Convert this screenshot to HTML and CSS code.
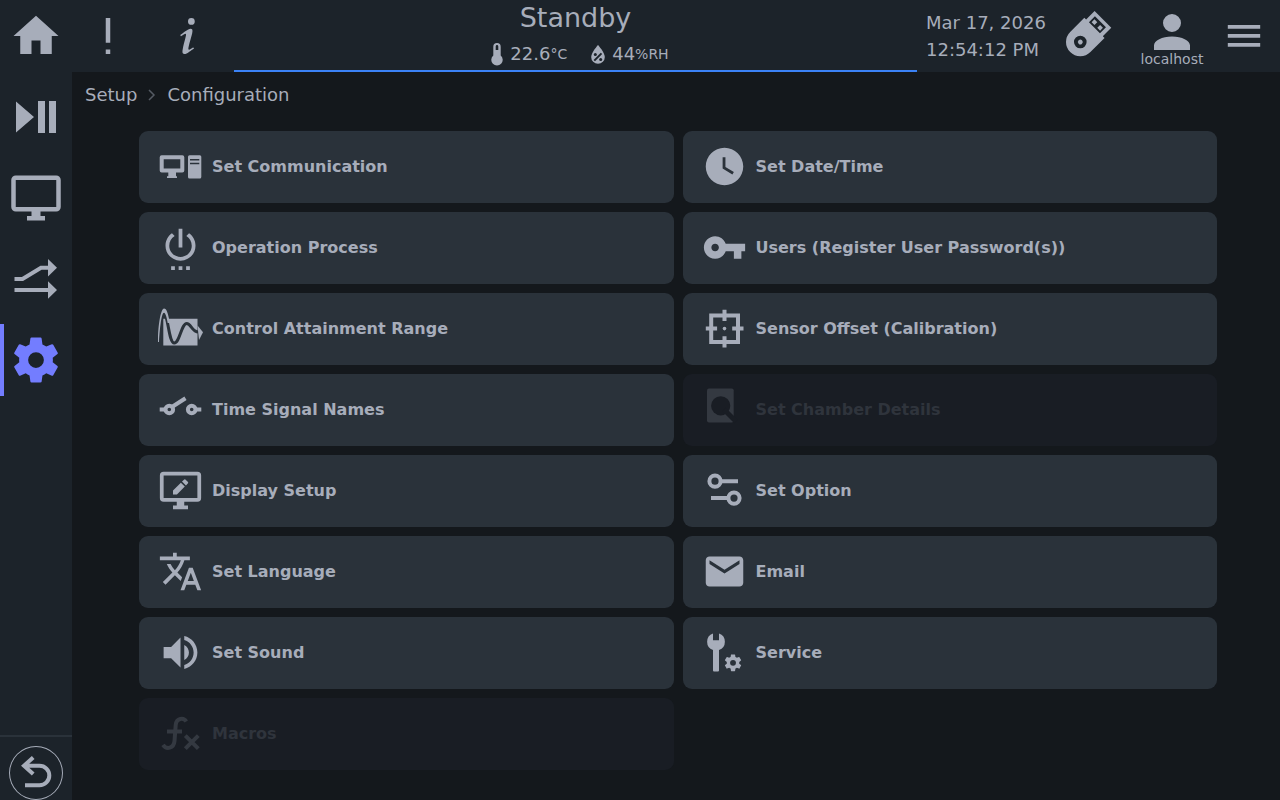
FILE: index.html
```html
<!DOCTYPE html>
<html lang="en">
<head>
  <meta charset="UTF-8">
  <meta name="viewport" content="width=device-width, initial-scale=1.0">
  <title>Setup - Configuration</title>
  <link rel="stylesheet" href="styles.css">
</head>
<body>
  <header class="topbar">
    <div class="topbar-left">
      <button class="icon-btn" aria-label="Home">
        <svg class="icon-lg" viewBox="0 0 24 24"><path d="M10 20v-6h4v6h5v-8h3L12 3 2 12h3v8z"/></svg>
      </button>
      <button class="icon-btn" aria-label="Alarms">
        <svg class="icon-lg" viewBox="0 0 24 24"><path d="M11 4h2v11h-2zM11 18h2v2h-2z"/></svg>
      </button>
      <button class="icon-btn info" aria-label="Information">
        <svg class="icon-lg" viewBox="0 0 24 24"><path d="M13.5 4A1.5 1.5 0 0 0 12 5.5 1.5 1.5 0 0 0 13.5 7 1.5 1.5 0 0 0 15 5.5 1.5 1.5 0 0 0 13.5 4m-.36 4.77c-1.19.1-4.44 2.69-4.44 2.69-.2.15-.14.14.02.42.16.27.14.29.33.16.2-.13.53-.34 1.08-.68 2.12-1.36.34 1.78-.57 7.07-.36 2.62 2 1.27 2.61.87.6-.39 2.21-1.5 2.37-1.61.22-.15.06-.27-.11-.52-.12-.17-.24-.05-.24-.05-.65.43-1.84 1.33-2 .76-.19-.57 1.03-4.48 1.7-7.17.11-.64.41-2.04-.75-1.94z"/></svg>
      </button>
    </div>

    <div class="status">
      <div class="status-title">Standby</div>
      <div class="readings">
        <div class="reading">
          <svg class="icon-temp" viewBox="0 0 12 23"><path fill-rule="evenodd" d="M2.300 3.700a3.700 3.700 0 0 1 7.400 0V12.500a5.700 5.700 0 1 1-7.400 0zM4.700 3.400V7h2.600V3.400a1.300 1.300 0 0 0-2.600 0z"/></svg>
          <span>22.6<small>°C</small></span>
        </div>
        <div class="reading">
          <svg class="icon-drop" viewBox="0 0 14 19"><path d="M7 0s6.800 7.600 6.800 11.900a6.800 6.800 0 0 1-13.600 0C.2 7.600 7 0 7 0z"/><path class="cut" d="M3.300 15.600l7.200-7.200"/><circle class="hole" cx="4.300" cy="9.400" r="1.500"/><circle class="hole" cx="9.700" cy="14.400" r="1.500"/></svg>
          <span>44<small>%RH</small></span>
        </div>
      </div>
    </div>

    <div class="topbar-right">
      <div class="clock">
        <div>Mar 17, 2026</div>
        <div>12:54:12 PM</div>
      </div>
      <button class="icon-btn usb" aria-label="USB memory">
        <svg class="icon-lg" viewBox="0 0 54 54">
          <g transform="translate(19.300 33) rotate(45)">
            <path fill-rule="evenodd" d="M-14.300 0V-20h2.500V-32h23.600v12h2.500V0a14.300 14.300 0 0 1-28.600 0zM-7.800-28.500v8.500H7.800v-8.500zM-6.300 0a6.300 6.300 0 1 0 12.600 0a6.300 6.300 0 1 0-12.600 0z"/>
            <path d="M-6-26h4v4h-4zM2-26h4v4H2z"/>
            <circle r="2.400"/>
          </g>
        </svg>
      </button>
      <button class="icon-btn user">
        <svg class="icon-user" viewBox="4 4 16 16"><path d="M12 4a4 4 0 0 1 4 4 4 4 0 0 1-4 4 4 4 0 0 1-4-4 4 4 0 0 1 4-4m0 10c4.420 0 8 1.790 8 4v2H4v-2c0-2.210 3.580-4 8-4z"/></svg>
        <span>localhost</span>
      </button>
      <button class="icon-btn" aria-label="Menu">
        <svg class="icon-lg" viewBox="0 0 54 54"><path d="M10.800 16h32.400v3.700H10.800zM10.800 25h32.400v3.700H10.800zM10.800 34h32.400v3.700H10.800z"/></svg>
      </button>
    </div>
  </header>

  <div class="layout">
    <nav class="sidebar">
      <a href="#" class="nav-item" aria-label="Operation">
        <svg class="icon-lg" viewBox="0 0 54 54"><path d="M7 11.500v31L25 27zM29 11h7v32h-7zM40 11h7v32h-7z"/></svg>
      </a>
      <a href="#" class="nav-item" aria-label="Monitor">
        <svg class="icon-lg" viewBox="0 0 24 24"><path d="M21 16H3V4h18m0-2H3a2 2 0 0 0-2 2v12a2 2 0 0 0 2 2h7v2H8v2h8v-2h-2v-2h7a2 2 0 0 0 2-2V4a2 2 0 0 0-2-2z"/></svg>
      </a>
      <a href="#" class="nav-item" aria-label="Programs">
        <svg class="icon-lg" viewBox="0 0 54 54"><path class="line" d="M5.500 27h8l18.500-11.200H40M5.500 38h35"/><path d="M39 7l9 8.800-9 8.800zM39 29.200l9 8.800-9 8.800z"/></svg>
      </a>
      <a href="#" class="nav-item active" aria-label="Setup">
        <svg class="icon-lg" viewBox="0 0 24 24"><path d="M12 15.500A3.500 3.500 0 0 1 8.500 12 3.500 3.500 0 0 1 12 8.500a3.500 3.500 0 0 1 3.500 3.500 3.500 3.500 0 0 1-3.500 3.500m7.430-2.530c.04-.32.07-.64.07-.97 0-.33-.03-.66-.07-1l2.110-1.630c.19-.15.24-.42.12-.64l-2-3.460c-.12-.22-.39-.31-.61-.22l-2.490 1c-.52-.39-1.060-.73-1.690-.98l-.37-2.650A.506.506 0 0 0 14 2h-4c-.25 0-.46.18-.5.42l-.37 2.650c-.63.25-1.170.59-1.690.98l-2.490-1c-.22-.09-.49 0-.61.22l-2 3.460c-.13.22-.07.49.12.64L4.570 11c-.04.34-.07.67-.07 1 0 .33.03.65.07.97l-2.110 1.660c-.19.15-.25.42-.12.64l2 3.460c.12.22.39.3.61.22l2.490-1.010c.52.4 1.060.74 1.690.99l.37 2.650c.04.24.25.42.5.42h4c.25 0 .46-.18.5-.42l.37-2.650c.63-.26 1.170-.59 1.690-.99l2.490 1.010c.22.08.49 0 .61-.22l2-3.460c.12-.22.07-.49-.12-.64l-2.110-1.660z"/></svg>
      </a>
      <div class="sidebar-bottom">
        <button class="back-btn" aria-label="Back">
          <svg class="icon-lg" viewBox="0 0 54 54"><path class="line" d="M24.200 11.500L15 19.700l9.200 8.400M15 19.700h15.500a9.800 9.800 0 0 1 0 19.600H16"/></svg>
        </button>
      </div>
    </nav>

    <main class="content">
      <div class="breadcrumb">
        <a href="#">Setup</a>
        <svg class="chevron" viewBox="0 0 8 12"><path d="M1 1l5 5-5 5"/></svg>
        <span>Configuration</span>
      </div>

      <div class="tiles">
        <button class="tile">
          <svg viewBox="0 0 45 45"><path fill-rule="evenodd" d="M3.700 11.200h20.600a2 2 0 0 1 2 2V26.500a2 2 0 0 1-2 2H18v3.700h1V34H9v-1.800h1.300V28.500H3.700a2 2 0 0 1-2-2V13.200a2 2 0 0 1 2-2zM5.700 15.200v9.300h16.600v-9.300z"/><path fill-rule="evenodd" d="M31.500 11.200h10.300a1.500 1.500 0 0 1 1.500 1.500V33a1.500 1.500 0 0 1-1.500 1.500H31.500A1.500 1.500 0 0 1 30 33V12.700a1.500 1.500 0 0 1 1.500-1.500zM32 15v1.500h9.300V15zM32 18.700V20.200h9.300v-1.500z"/></svg>
          <span>Set Communication</span>
        </button>
        <button class="tile">
          <svg viewBox="0 0 24 24"><path d="M12 2C6.500 2 2 6.500 2 12s4.500 10 10 10 10-4.500 10-10S17.500 2 12 2m4.200 14.200L11 13V7h1.500v5.200l4.500 2.700z"/></svg>
          <span>Set Date/Time</span>
        </button>
        <button class="tile">
          <svg viewBox="0 0 24 24"><path d="M7 24h2v-2H7v2zm4 0h2v-2h-2v2zm2-22h-2v10h2V2zm3.560 2.440l-1.450 1.450C16.840 6.940 18 8.830 18 11c0 3.310-2.690 6-6 6s-6-2.690-6-6c0-2.170 1.160-4.060 2.880-5.120L7.440 4.440C5.360 5.880 4 8.280 4 11c0 4.420 3.580 8 8 8s8-3.580 8-8c0-2.720-1.360-5.120-3.440-6.560zM15 24h2v-2h-2v2z"/></svg>
          <span>Operation Process</span>
        </button>
        <button class="tile">
          <svg viewBox="0 0 24 24"><path d="M12.650 10C11.830 7.670 9.610 6 7 6c-3.310 0-6 2.690-6 6s2.690 6 6 6c2.610 0 4.830-1.670 5.650-4H17v4h4v-4h2v-4H12.650zM7 14c-1.100 0-2-.9-2-2s.9-2 2-2 2 .9 2 2-.9 2-2 2z"/></svg>
          <span>Users (Register User Password(s))</span>
        </button>
        <button class="tile">
          <svg viewBox="0 0 45 45"><path d="M5.300 12.800H39.500V39.500H5.300z"/><path class="cut-wave" d="M6.500 7C10.500 13 11 37 16.300 37C21.500 37 23.500 17.500 28.700 17.500C33 17.500 34 26 40.500 26"/><path d="M0 36C0 18 3 2.500 6 2.500C8.600 2.500 10 7.500 11 12.800L11.600 17H9.700C8.800 12 7.600 6.800 6 6.800C3.700 6.800 2 20 1 36z"/><path d="M39.500 19.500l5.500 6.800L41 34z"/></svg>
          <span>Control Attainment Range</span>
        </button>
        <button class="tile">
          <svg viewBox="0 0 45 45"><path class="line" d="M9.200 9.400h26.800v26.600H9.200zM22.500 3.800v11.300M22.500 30.200v11.300M3.800 22.600h11.300M30.200 22.600h11.300"/><circle cx="22.500" cy="22.600" r="1.800"/></svg>
          <span>Sensor Offset (Calibration)</span>
        </button>
        <button class="tile">
          <svg viewBox="0 0 45 45"><path class="line" d="M1.700 22.500H7M38 22.500h5.300M13.500 20.300L27.500 11.200"/><circle class="line" cx="11.300" cy="22.500" r="3.800"/><circle class="line" cx="33.700" cy="22.500" r="3.800"/></svg>
          <span>Time Signal Names</span>
        </button>
        <button class="tile" disabled>
          <svg viewBox="0 0 45 45"><path d="M7 1.500h22.700a2 2 0 0 1 2 2V33.500a2 2 0 0 1-2 2H7a2 2 0 0 1-2-2V3.500a2 2 0 0 1 2-2z"/><circle class="lens" cx="18.700" cy="18.800" r="9.600"/><path class="handle" d="M22 22.500L34 34.500"/></svg>
          <span>Set Chamber Details</span>
        </button>
        <button class="tile">
          <svg viewBox="0 0 24 24"><path d="M21 16H3V4h18m0-2H3a2 2 0 0 0-2 2v12a2 2 0 0 0 2 2h7v2H8v2h8v-2h-2v-2h7a2 2 0 0 0 2-2V4a2 2 0 0 0-2-2z"/><path d="M8 12v2.100h2.100l4.200-4.200-2.100-2.100zM12.800 7.200l1.200-1.100q.3-.2.6 0l1.400 1.400q.2.300 0 .6l-1.100 1.200z"/></svg>
          <span>Display Setup</span>
        </button>
        <button class="tile">
          <svg viewBox="0 0 45 45"><circle class="line" cx="13" cy="13.200" r="5.600"/><circle class="line" cx="32" cy="30.100" r="5.600"/><path class="line" d="M19.500 13.200H36M9 30.100h17"/></svg>
          <span>Set Option</span>
        </button>
        <button class="tile">
          <svg viewBox="0 0 24 24"><path d="M12.870 15.070l-2.540-2.510.03-.03c1.740-1.940 2.980-4.170 3.710-6.530H17V4h-7V2H8v2H1v1.990h11.170C11.500 7.920 10.440 9.750 9 11.350 8.070 10.320 7.300 9.190 6.690 8h-2c.73 1.630 1.730 3.170 2.980 4.560l-5.090 5.020L4 19l5-5 3.110 3.110.76-2.040zM18.500 10h-2L12 22h2l1.120-3h4.750L21 22h2l-4.500-12zm-2.620 7l1.620-4.330L19.120 17h-3.240z"/></svg>
          <span>Set Language</span>
        </button>
        <button class="tile">
          <svg viewBox="0 0 24 24"><path d="M20 4H4c-1.100 0-2 .9-2 2v12c0 1.100.9 2 2 2h16c1.100 0 2-.9 2-2V6c0-1.100-.9-2-2-2zm0 4l-8 5-8-5V6l8 5 8-5v2z"/></svg>
          <span>Email</span>
        </button>
        <button class="tile">
          <svg viewBox="0 0 24 24"><path d="M3 9v6h4l5 5V4L7 9H3zm13.500 3c0-1.770-1.020-3.290-2.500-4.030v8.050c1.480-.73 2.500-2.250 2.500-4.020zM14 3.230v2.060c2.890.86 5 3.540 5 6.710s-2.110 5.850-5 6.710v2.060c4.010-.91 7-4.490 7-8.770s-2.990-7.860-7-8.770z"/></svg>
          <span>Set Sound</span>
        </button>
        <button class="tile">
          <svg viewBox="0 0 45 45">
            <path d="M11 3.500v6.700h6V3.500a8.800 8.800 0 0 1 0 16.600V40.500a1 1 0 0 1-1 1h-4a1 1 0 0 1-1-1V20.100A8.800 8.800 0 0 1 11 3.500z"/>
            <g transform="translate(21 22.800) scale(.835)"><path d="M12 15.500A3.500 3.500 0 0 1 8.500 12 3.500 3.500 0 0 1 12 8.500a3.500 3.500 0 0 1 3.500 3.500 3.500 3.500 0 0 1-3.500 3.500m7.430-2.530c.04-.32.07-.64.07-.97 0-.33-.03-.66-.07-1l2.110-1.630c.19-.15.24-.42.12-.64l-2-3.460c-.12-.22-.39-.31-.61-.22l-2.490 1c-.52-.39-1.060-.73-1.690-.98l-.37-2.650A.506.506 0 0 0 14 2h-4c-.25 0-.46.18-.5.42l-.37 2.650c-.63.25-1.170.59-1.690.98l-2.490-1c-.22-.09-.49 0-.61.22l-2 3.460c-.13.22-.07.49.12.64L4.570 11c-.04.34-.07.67-.07 1 0 .33.03.65.07.97l-2.110 1.660c-.19.15-.25.42-.12.64l2 3.460c.12.22.39.3.61.22l2.490-1.010c.52.4 1.060.74 1.690.99l.37 2.650c.04.24.25.42.5.42h4c.25 0 .46-.18.5-.42l.37-2.650c.63-.26 1.170-.59 1.690-.99l2.490 1.010c.22.08.49 0 .61-.22l2-3.460c.12-.22.07-.49-.12-.64l-2.110-1.660z"/></g>
          </svg>
          <span>Service</span>
        </button>
        <button class="tile" disabled>
          <svg viewBox="0 0 45 45"><path class="line" d="M28.300 10.500C25.500 6.300 18.500 7 17.700 14L16.500 30C15.800 37.500 8.500 39 5 33.800M9 20.500h15M27.300 24.700l13 13M40.300 24.700l-13 13"/></svg>
          <span>Macros</span>
        </button>
      </div>
    </main>
  </div>
</body>
</html>
```
FILE: styles.css
```css
* {
  box-sizing: border-box;
}
body {
  margin: 0;
  min-height: 100vh;
  display: flex;
  flex-direction: column;
  font-family: "DejaVu Sans", sans-serif;
  font-size: 18px;
  background-color: #14181c;
  color: #a7adba;
}
button {
  padding: 0;
  border: none;
  background: none;
  color: inherit;
  font-family: inherit;
  cursor: pointer;
}
a {
  color: inherit;
  text-decoration: none;
}
svg {
  display: block;
  flex-shrink: 0;
  fill: currentColor;
}
svg .line {
  fill: none;
  stroke: currentColor;
  stroke-width: 4;
}

/* Top bar */
.topbar {
  display: flex;
  height: 72px;
  background-color: #1c232a;
}
.topbar-left {
  display: flex;
  width: 234px;
}
.icon-btn {
  display: flex;
  align-items: center;
  justify-content: center;
  width: 72px;
  height: 72px;
}
.info {
  margin-left: 8px;
}
.icon-lg {
  width: 54px;
  height: 54px;
}
.icon-user {
  width: 36px;
  height: 36px;
}
.status {
  flex: 1;
  display: flex;
  flex-direction: column;
  align-items: center;
  border-bottom: 2px solid #3b82f6;
}
.status-title {
  font-size: 27px;
  line-height: 36px;
}
.readings {
  display: flex;
  gap: 24px;
  line-height: 36px;
  padding-left: 9px;
}
.readings small {
  font-size: 14px;
  vertical-align: 1px;
}
.reading {
  display: flex;
  align-items: center;
  gap: 7px;
}
.icon-temp {
  width: 12px;
  height: 23px;
}
.icon-drop {
  width: 14px;
  height: 19px;
}
.icon-drop .cut {
  stroke: #1c232a;
  stroke-width: 2;
}
.icon-drop .hole {
  fill: #1c232a;
}
.topbar-right {
  display: flex;
  width: 363px;
}
.clock {
  flex: 1;
  padding: 9px 0 0 9px;
  line-height: 27px;
  white-space: nowrap;
}
.usb {
  margin-right: 12px;
}
.user {
  flex-direction: column;
  font-size: 14px;
  line-height: 18px;
  padding-top: 10px;
}

/* Sidebar */
.layout {
  flex: 1;
  display: flex;
}
.sidebar {
  display: flex;
  flex-direction: column;
  gap: 9px;
  width: 72px;
  padding-top: 9px;
  background-color: #1c232a;
}
.nav-item {
  display: flex;
  align-items: center;
  justify-content: center;
  height: 72px;
  border-left: 4px solid transparent;
  padding-right: 4px;
}
.nav-item.active {
  border-left-color: #737dff;
  color: #737dff;
}
.sidebar-bottom {
  margin-top: auto;
  padding: 9px 9px 0;
  border-top: 2px solid #2a323a;
}
.back-btn {
  display: block;
  width: 54px;
  height: 54px;
  border-radius: 50%;
  box-shadow: inset 0 0 0 1px #a7adba;
}

/* Content */
.content {
  flex: 1;
  padding: 9px 63px 9px 67px;
}
.breadcrumb {
  display: flex;
  align-items: center;
  gap: 11px;
  height: 27px;
  margin-left: -54px;
  margin-bottom: 23px;
}
.chevron {
  width: 8px;
  height: 12px;
  fill: none;
  stroke: #555b64;
  stroke-width: 1.5;
}
.tiles {
  display: grid;
  grid-template-columns: 1fr 1fr;
  gap: 9px;
}
.tile {
  display: flex;
  align-items: center;
  gap: 9px;
  height: 72px;
  padding: 0 19px 2px;
  border-radius: 9px;
  background-color: #2a323a;
  font-size: 16px;
  font-weight: bold;
  text-align: left;
}
.tile svg {
  width: 45px;
  height: 45px;
}
.tile .cut-wave {
  fill: none;
  stroke: #2a323a;
  stroke-width: 3;
}
.tile:disabled {
  background-color: #191d24;
  color: #2f343c;
  cursor: default;
}
.tile:disabled svg {
  color: #343941;
}
.tile .lens {
  fill: #191d24;
}
.tile .handle {
  stroke: #191d24;
  stroke-width: 5;
}
```
